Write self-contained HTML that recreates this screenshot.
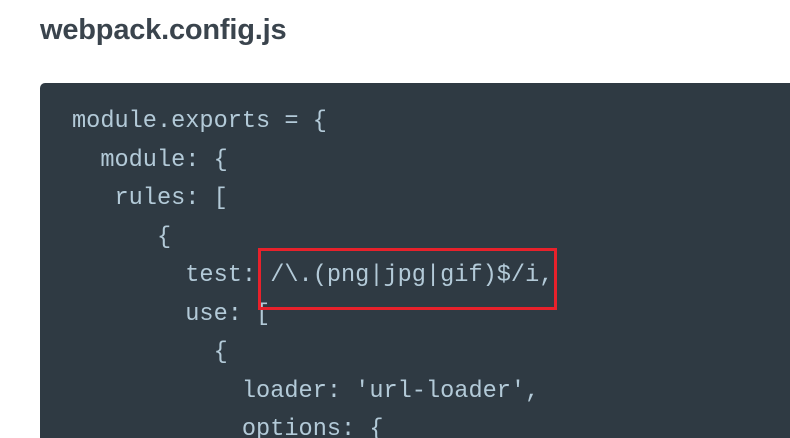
<!DOCTYPE html>
<html><head><style>
html,body{margin:0;padding:0;background:#fff;width:790px;height:438px;overflow:hidden;position:relative}
h1{position:absolute;left:40px;top:10px;margin:0;font:bold 29px/40px "Liberation Sans",sans-serif;color:#3a444d;letter-spacing:-0.2px}
.code{position:absolute;left:40px;top:83px;width:750px;height:355px;background:#2f3a43;border-radius:5px 0 0 0;overflow:hidden}
pre{position:absolute;left:32px;top:20px;margin:0;font:23.6px/38.5px "Liberation Mono",monospace;color:#b3cad8}
.box{position:absolute;left:258px;top:248px;width:293px;height:56px;border:3px solid #e8212b}
</style></head><body>
<h1>webpack.config.js</h1>
<div class="code"><pre>module.exports = {
  module: {
   rules: [
      {
        test: /\.(png|jpg|gif)$/i,
        use: [
          {
            loader: 'url-loader',
            options: {</pre></div>
<div class="box"></div>
</body></html>
